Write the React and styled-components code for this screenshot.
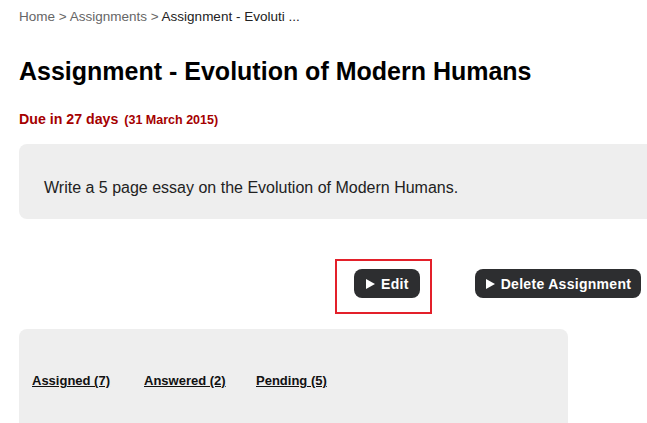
import React from "react";
import styled, { createGlobalStyle } from "styled-components";

const Global = createGlobalStyle`
  html, body { margin: 0; padding: 0; background: #fff; }
  body { font-family: "Liberation Sans", Arial, sans-serif; color: #111; }
`;

const Page = styled.div`
  width: 647px;
  height: 423px;
  overflow: hidden;
  padding: 9px 0 0 19px;
  box-sizing: border-box;
`;

const Breadcrumb = styled.nav`
  font-size: 13.5px;
  line-height: 15px;
  color: #666;
  white-space: nowrap;
`;

const Crumb = styled.span`
  color: ${(p) => (p.$current ? "#222" : "#666")};
`;

const Title = styled.h1`
  margin: 33px 0 0;
  font-size: 25px;
  line-height: 29px;
  font-weight: bold;
  color: #000;
  white-space: nowrap;
`;

const Due = styled.div`
  margin-top: 25px;
  font-size: 14.2px;
  line-height: 16px;
  font-weight: bold;
  color: #a50000;
`;

const DueDate = styled.span`
  margin-left: 2px;
  font-size: 12.5px;
`;

const Description = styled.div`
  margin-top: 16px;
  width: 700px;
  height: 75px;
  box-sizing: border-box;
  padding: 35px 25px 0;
  background: #eeeeee;
  border-radius: 8px;
  font-size: 16px;
  line-height: 18px;
  color: #222;
`;

const Actions = styled.div`
  margin: 40px 0 0 316px;
  display: flex;
  align-items: flex-start;
  gap: 43px;
`;

const Highlight = styled.div`
  border: 2px solid #e3202a;
  padding: 8px 10px 14px 17px;
  display: flex;
`;

const ActionButton = styled.button`
  margin-top: ${(p) => p.$offset || 0}px;
  display: inline-flex;
  align-items: center;
  gap: 6px;
  height: 29px;
  padding: 0 ${(p) => p.$pr || 11}px 0 ${(p) => p.$pl || 12}px;
  border: none;
  border-radius: 8px;
  background: #2d2e30;
  color: #fff;
  font-family: "Liberation Sans", Arial, sans-serif;
  font-size: 14px;
  font-weight: bold;
  line-height: 16px;
  letter-spacing: 0.3px;
  white-space: nowrap;
  cursor: pointer;
`;

const Tabs = styled.div`
  margin-top: 15px;
  width: 549px;
  height: 130px;
  box-sizing: border-box;
  padding: 44px 0 0 13px;
  background: #eeeeee;
  border-radius: 8px;
  display: grid;
  grid-template-columns: repeat(3, 112px);
  align-content: start;
`;

const TabLink = styled.a`
  font-size: 13px;
  line-height: 15px;
  font-weight: bold;
  color: #111;
  text-decoration: underline;
  white-space: nowrap;
`;

const Play = () => (
  <svg width="9" height="10" viewBox="0 0 9 10" aria-hidden="true">
    <polygon points="0,0 9,5 0,10" fill="#fff" />
  </svg>
);

export default function App() {
  return (
    <>
      <Global />
      <Page>
        <Breadcrumb>
          <Crumb>Home</Crumb> &gt; <Crumb>Assignments</Crumb> &gt;{" "}
          <Crumb $current>Assignment - Evoluti ...</Crumb>
        </Breadcrumb>
        <Title>Assignment - Evolution of Modern Humans</Title>
        <Due>
          Due in 27 days <DueDate>(31 March 2015)</DueDate>
        </Due>
        <Description>
          Write a 5 page essay on the Evolution of Modern Humans.
        </Description>
        <Actions>
          <Highlight>
            <ActionButton>
              <Play />
              Edit
            </ActionButton>
          </Highlight>
          <ActionButton $offset={10} $pl={11} $pr={10}>
            <Play />
            Delete Assignment
          </ActionButton>
        </Actions>
        <Tabs>
          <TabLink href="#">Assigned (7)</TabLink>
          <TabLink href="#">Answered (2)</TabLink>
          <TabLink href="#">Pending (5)</TabLink>
        </Tabs>
      </Page>
    </>
  );
}
